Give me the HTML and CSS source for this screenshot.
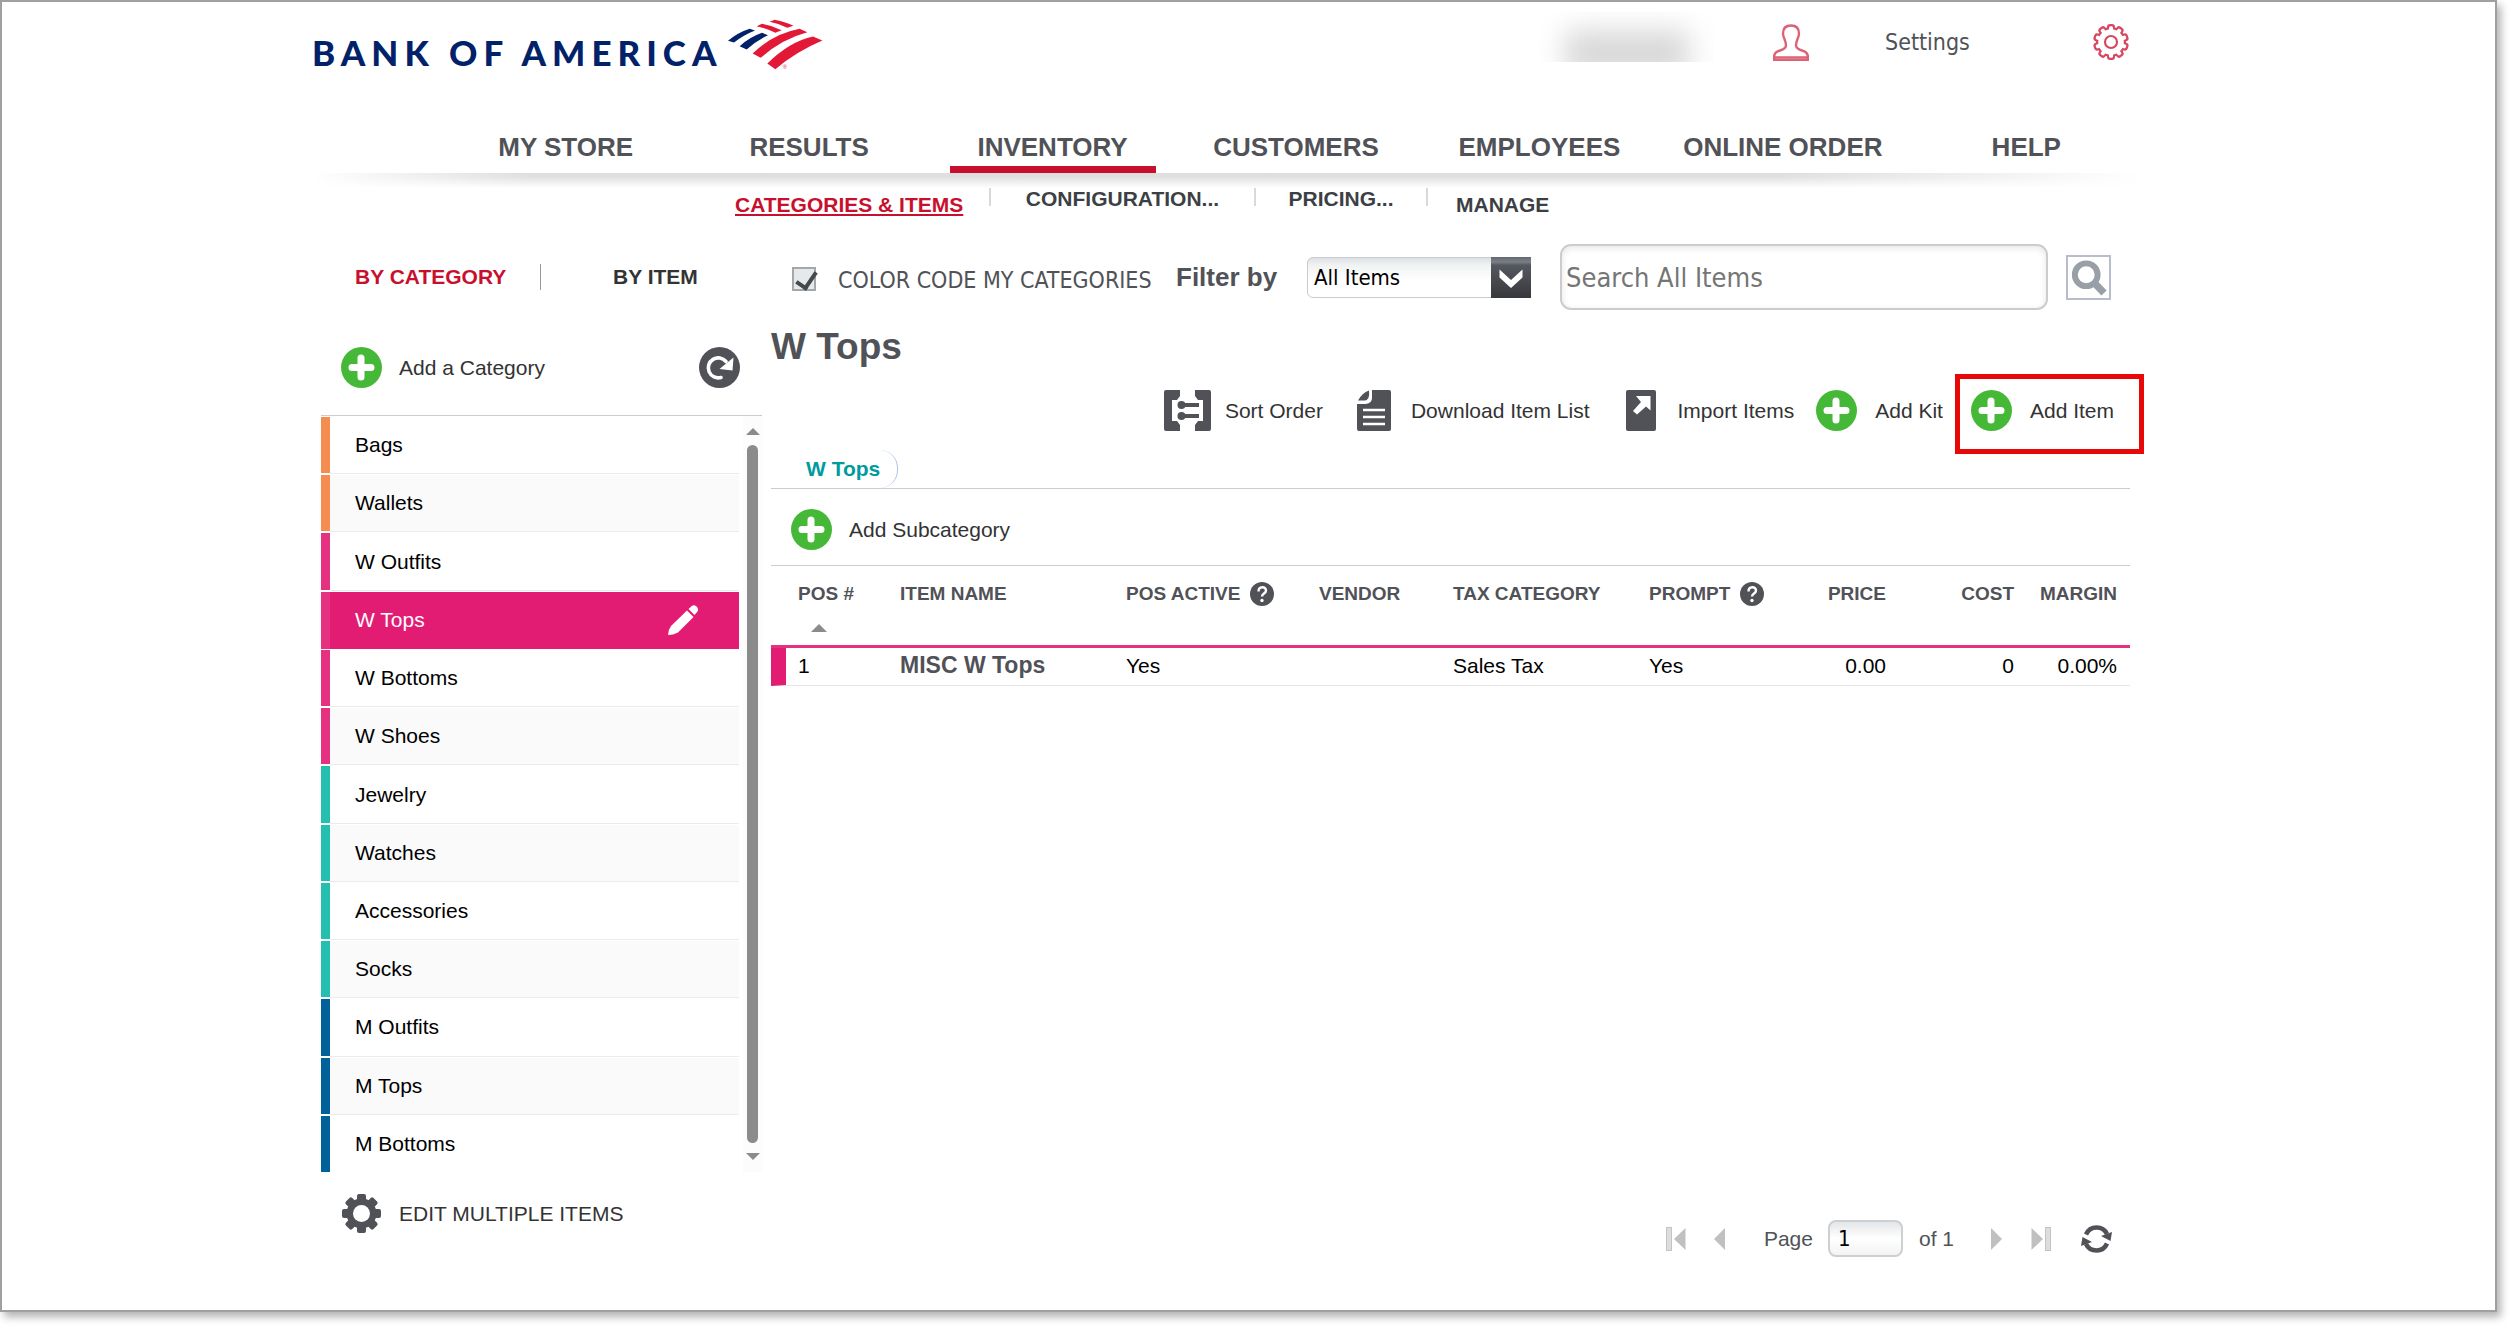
FILE: index.html
```html
<!DOCTYPE html>
<html lang="en">
<head>
<meta charset="utf-8">
<title>Inventory - Categories &amp; Items</title>
<link rel="stylesheet" href="styles.css">
</head>
<body>
<svg class="defs" aria-hidden="true">
  <symbol id="plus" viewBox="0 0 41 41"><circle cx="20.5" cy="20.5" r="20.5" fill="#45b937"/><path d="M20 11v19M11 20.500h19" stroke="#fff" stroke-width="7" stroke-linecap="round"/></symbol>
  <symbol id="help" viewBox="0 0 24 24"><circle cx="12" cy="12" r="12" fill="#505257"/><path d="M8.500 9.500c0-5.500 7.500-5.500 7.500-1 0 3-4 3-4 6" fill="none" stroke="#fff" stroke-width="2.400"/><circle cx="12" cy="18.500" r="1.700" fill="#fff"/></symbol>
</svg>
<div class="frame">
  <header class="header">
    <a class="logo" href="#"><span class="wordmark">BANK OF AMERICA</span>
      <svg class="flag" viewBox="20 28 285 155" aria-hidden="true">
        <g fill="#012169"><path d="M20 93Q50 68 85 57L101 62Q68 75 38 98Z"/><path d="M55 109Q85 82 122 69L140 76Q105 92 76 119Z"/></g>
        <g fill="#e31837"><path d="M145 36L160 30Q195 37 216 48L198 54Q175 42 145 36Z"/><path d="M106 49L122 42Q155 48 181 61L162 69Q135 56 106 49Z"/><path d="M94 131Q155 72 235 57L258 67Q180 88 118 144Z"/><path d="M138 161Q205 95 275 80L303 92Q225 125 162 178Z"/><text x="184" y="178" font-size="17" font-family="Liberation Sans, sans-serif">®</text></g>
      </svg>
    </a>
    <div class="account">
      <span class="redacted"></span>
      <svg class="user" viewBox="0 0 36 37" fill="none" stroke="#dc6276" stroke-width="2.400" stroke-linejoin="round"><path d="M18 1.500c-5 0-8 3-8 8 0 4 3 7 3 12 0 3-3 4-6 5-4 1-6 3-6 7v2.500h34V33.500c0-4-2-6-6-7-3-1-6-2-6-5 0-5 3-8 3-12 0-5-3-8-8-8z"/><path d="M1 33.500h34"/></svg>
      <a class="settings" href="#">Settings</a>
      <svg class="gear" viewBox="0 0 36 36">
        <g fill="#d8475f"><circle cx="18" cy="18" r="15"/><g id="rt"><rect x="14" y="0" width="8" height="36" rx="3"/></g><use href="#rt" transform="rotate(36 18 18)"/><use href="#rt" transform="rotate(72 18 18)"/><use href="#rt" transform="rotate(108 18 18)"/><use href="#rt" transform="rotate(144 18 18)"/></g>
        <g fill="#fff"><circle cx="18" cy="18" r="12.800"/><g id="wt"><rect x="16" y="2.200" width="4" height="31.600" rx="1.500"/></g><use href="#wt" transform="rotate(36 18 18)"/><use href="#wt" transform="rotate(72 18 18)"/><use href="#wt" transform="rotate(108 18 18)"/><use href="#wt" transform="rotate(144 18 18)"/></g>
        <circle cx="18" cy="18" r="6" fill="none" stroke="#d8475f" stroke-width="2.200"/>
      </svg>
    </div>
  </header>
  <nav class="nav">
    <a href="#">MY STORE</a><a href="#">RESULTS</a><a class="on" href="#">INVENTORY</a><a href="#">CUSTOMERS</a><a href="#">EMPLOYEES</a><a href="#">ONLINE ORDER</a><a href="#">HELP</a>
  </nav>
  <div class="shade"></div>
  <nav class="subnav">
    <span class="sub low"><a class="on" href="#">CATEGORIES &amp; ITEMS</a></span>
    <span class="sub mid"><a href="#">CONFIGURATION...</a></span>
    <span class="sub mid"><a href="#">PRICING...</a></span>
    <span class="sub low end"><a href="#">MANAGE</a></span>
  </nav>
  <div class="columns">
    <aside class="side">
      <div class="tabs"><a class="on" href="#">BY CATEGORY</a><a href="#">BY ITEM</a></div>
      <div class="add-category">
        <button class="action" type="button"><svg class="plus"><use href="#plus"/></svg>Add a Category</button>
        <button class="icon" type="button" aria-label="Refresh"><svg class="plus" viewBox="0 0 41 41"><circle cx="20.500" cy="20.500" r="20.500" fill="#505257"/><path d="M22 30.500a10 10 0 1 1 5-16" fill="none" stroke="#fff" stroke-width="3.600" stroke-linecap="round"/><path d="M34.500 10.500l-1 13-13-1.500z" fill="#fff"/></svg></button>
      </div>
      <div class="list">
        <ul class="cats">
          <li class="orange"><a href="#">Bags</a></li>
          <li class="orange"><a href="#">Wallets</a></li>
          <li class="pink"><a href="#">W Outfits</a></li>
          <li class="pink selected"><a href="#">W Tops<svg class="pencil" viewBox="0 0 30 30" fill="#fff"><path d="M19 5.500l6.500 6.500L10 27.500Q5 30 0 30 0 25 3 21z"/><path d="M20.500 4L24 .8Q26-.6 28.500 1.500 31 4 29.500 6.500L26.500 10z"/></svg></a></li>
          <li class="pink"><a href="#">W Bottoms</a></li>
          <li class="pink"><a href="#">W Shoes</a></li>
          <li class="teal"><a href="#">Jewelry</a></li>
          <li class="teal"><a href="#">Watches</a></li>
          <li class="teal"><a href="#">Accessories</a></li>
          <li class="teal"><a href="#">Socks</a></li>
          <li class="blue"><a href="#">M Outfits</a></li>
          <li class="blue"><a href="#">M Tops</a></li>
          <li class="blue"><a href="#">M Bottoms</a></li>
        </ul>
        <div class="scroll" aria-hidden="true"><i class="up"></i><i class="thumb"></i><i class="down"></i></div>
      </div>
      <button class="action edit" type="button"><svg class="plus" viewBox="0 0 41 41"><g fill="#505257"><g id="gt"><rect x="16" y="1" width="9" height="39" rx="2"/></g><use href="#gt" transform="rotate(45 20.500 20.500)"/><use href="#gt" transform="rotate(90 20.500 20.500)"/><use href="#gt" transform="rotate(135 20.500 20.500)"/><circle cx="20.500" cy="20.500" r="15"/></g><circle cx="20.500" cy="20.500" r="8.500" fill="#fff"/></svg>EDIT MULTIPLE ITEMS</button>
    </aside>
    <main class="main">
      <form class="filters">
        <input class="check" type="checkbox" id="color" checked>
        <label class="color" for="color">COLOR CODE MY CATEGORIES</label>
        <label class="filter" for="filter">Filter by</label>
        <span class="pick"><select id="filter"><option>All Items</option></select><svg viewBox="0 0 40 41" aria-hidden="true"><path d="M8.500 12.500L20 23l11.500-10.500v8L20 31 8.500 20.500z" fill="#fff"/></svg></span>
        <input class="search" type="text" placeholder="Search All Items" aria-label="Search All Items">
        <button class="go" type="button" aria-label="Search"><svg viewBox="0 0 45 45" fill="none" stroke="#989fa6"><circle cx="20" cy="19.500" r="12.500" stroke-width="6.500"/><path d="M28.500 28l11 11.500" stroke-width="8"/></svg></button>
      </form>
      <h1>W Tops</h1>
      <div class="toolbar">
        <button class="tool" type="button"><svg width="47" height="41" viewBox="0 0 47 41"><path d="M2 0h14v6l-3 4H8v21h5l3 4v6H2q-2 0-2-2V2Q0 0 2 0zM45 0H31v6l3 4h5v21h-5l-3 4v6h14q2 0 2-2V2q0-2-2-2z" fill="#505257"/><path d="M17 15h18M17 26h18" stroke="#505257" stroke-width="4"/><circle cx="17.500" cy="15" r="4" fill="#505257"/><circle cx="17.500" cy="26" r="4" fill="#505257"/></svg>Sort Order</button>
        <button class="tool download" type="button"><svg width="34" height="41" viewBox="0 0 34 41"><path d="M15 0h17q2 0 2 2v37q0 2-2 2H2q-2 0-2-2V14h9q6-1 6-6z" fill="#505257"/><path d="M1 10.500Q5 3 12 .5q1 9-4 10z" fill="#505257"/><path d="M6 20h22M6 27h22M6 34h22" stroke="#fff" stroke-width="2.500"/></svg>Download Item List</button>
        <button class="tool import" type="button"><svg width="30" height="41" viewBox="0 0 30 41"><rect width="30" height="41" rx="2" fill="#505257"/><path d="M10 6h14.500v14.500l-4.500-4-9 8-4-3.500 8-9z" fill="#fff"/></svg>Import Items</button>
        <button class="tool kit" type="button"><svg class="plus"><use href="#plus"/></svg>Add Kit</button>
        <button class="tool item" type="button"><svg class="plus"><use href="#plus"/></svg>Add Item</button>
      </div>
      <div class="crumbs"><a href="#">W Tops</a></div>
      <div class="subcategory"><button class="action" type="button"><svg class="plus"><use href="#plus"/></svg>Add Subcategory</button></div>
      <table class="items">
        <colgroup><col class="c1"><col class="c2"><col class="c3"><col class="c4"><col class="c5"><col class="c6"><col class="c7"><col class="c8"><col class="c9"></colgroup>
        <thead><tr><th>POS #<i class="sort"></i></th><th>ITEM NAME</th><th>POS ACTIVE<svg class="help"><use href="#help"/></svg></th><th>VENDOR</th><th>TAX CATEGORY</th><th>PROMPT<svg class="help"><use href="#help"/></svg></th><th class="num">PRICE</th><th class="num">COST</th><th class="num">MARGIN</th></tr></thead>
        <tbody><tr><td>1</td><td><a href="#">MISC W Tops</a></td><td>Yes</td><td></td><td>Sales Tax</td><td>Yes</td><td class="num">0.00</td><td class="num">0</td><td class="num">0.00%</td></tr></tbody>
      </table>
      <div class="pager">
        <button type="button" class="icon" aria-label="First page"><svg width="20" height="24" viewBox="0 0 20 24"><rect x=".5" y=".5" width="5" height="23" fill="#ddd" stroke="#c4c4c4"/><path d="M19.500 1v22L8 12z" fill="#c0c0c0"/></svg></button>
        <button type="button" class="icon prev" aria-label="Previous page"><svg width="13" height="24" viewBox="0 0 13 24"><path d="M12 1v22L1 12z" fill="#c0c0c0"/></svg></button>
        <label for="page">Page</label><input id="page" type="text" value="1"><span class="of">of 1</span>
        <button type="button" class="icon next" aria-label="Next page"><svg width="13" height="24" viewBox="0 0 13 24"><path d="M1 1v22l11-11z" fill="#c0c0c0"/></svg></button>
        <button type="button" class="icon final" aria-label="Last page"><svg width="20" height="24" viewBox="0 0 20 24"><rect x="14.500" y=".5" width="5" height="23" fill="#ddd" stroke="#c4c4c4"/><path d="M.5 1v22L12 12z" fill="#c0c0c0"/></svg></button>
        <button type="button" class="icon" aria-label="Reload"><svg width="31" height="28" viewBox="0 0 31 28"><path d="M5 9.500Q8 2.500 15.500 2.500T26 9M26 18.500q-3 7-10.500 7T5 19" fill="none" stroke="#505257" stroke-width="4.500"/><path d="M20 11l11-4-1.500 9zM11 17L0 21l1.500-9z" fill="#505257"/></svg></button>
      </div>
    </main>
  </div>
</div>
</body>
</html>
```
FILE: styles.css
```css
* { box-sizing: border-box; }
body { margin: 0; padding: 0 14px 15px 0; background: #fff; color: #333; font: 21px/24px "Liberation Sans", Arial, sans-serif; }
a { color: inherit; text-decoration: none; }
svg { display: block; flex: none; }
button { border: 0; padding: 0; background: none; color: inherit; font: inherit; cursor: pointer; }
.defs { position: absolute; width: 0; height: 0; }
.frame { border: 2px solid #a0a0a0; padding: 0 343px 53px 310px; box-shadow: 4px 5px 8px rgba(0, 0, 0, .3); }

.header { display: flex; justify-content: space-between; align-items: center; height: 80px; }
.logo { display: flex; align-items: flex-start; gap: 6px; padding-top: 6px; color: #012169; }
.wordmark { padding-top: 13px; font: 900 35px/40px Lato, sans-serif; letter-spacing: 6px; }
.flag { width: 95px; height: 52px; }
.account { display: flex; align-items: center; padding-right: 23px; color: #505257; }
.redacted { width: 176px; height: 50px; margin: 0 58px 10px 0; overflow: hidden; }
.redacted::before { content: ""; display: block; width: 124px; height: 46px; margin: 18px 26px 0; background: #d8d8d8; filter: blur(14px); }
.user { width: 36px; height: 37px; margin-right: 76px; }
.settings { width: 208px; font: 23px/28px "DejaVu Sans Condensed", "Noto Sans", sans-serif; }
.gear { width: 36px; height: 36px; }

.nav { display: grid; grid-template-columns: repeat(7, 1fr); justify-items: center; padding: 50px 4px 0 132px; color: #505257; font: 700 26px/30px "Liberation Sans", Arial, sans-serif; }
.nav a { width: 206px; padding-bottom: 4px; border-bottom: 7px solid transparent; text-align: center; white-space: nowrap; }
.nav .on { border-color: #c8102e; }
.shade { height: 15px; margin-right: 10px; background: linear-gradient(90deg, #fff, transparent 12%, transparent 80%, #fff), linear-gradient(#ddd, #e2e2e2 30%, #fff); }
.subnav { display: grid; grid-template-columns: 256px 265px 172px auto; height: 56px; padding-left: 423px; color: #3c3f44; font-weight: 700; }
.sub { height: 18px; border-right: 2px solid #d9d9d9; }
.mid { line-height: 22px; text-align: center; }
.low { line-height: 34px; }
.end { border: 0; padding-left: 28px; }
.subnav .on { color: #c8102e; text-decoration: underline; text-decoration-thickness: 2px; text-underline-offset: 2px; text-decoration-skip-ink: none; }

.columns { display: grid; grid-template-columns: 441px 1fr; gap: 9px; padding: 0 29px 0 9px; }
.side { padding-bottom: 4px; }
.tabs { display: flex; align-items: center; height: 66px; font-weight: 700; line-height: 26px; }
.tabs a { padding-left: 72px; }
.tabs .on { width: 220px; padding-left: 34px; border-right: 1px solid #999; color: #c8102e; }
.action { display: flex; align-items: center; gap: 17px; padding-left: 20px; }
.plus { width: 41px; height: 41px; }
.add-category { display: flex; justify-content: space-between; align-items: center; height: 106px; padding: 10px 22px 0 0; border-bottom: 1px solid #ccc; }
.list { display: flex; justify-content: space-between; height: 758px; }
.cats { display: flex; flex: none; flex-direction: column; width: 418px; margin: 1px 0 0; padding: 0; list-style: none; color: #000; }
.cats li { display: flex; flex: 1; padding-bottom: 1px; }
.cats li::before { content: ""; width: 9px; margin-bottom: 1px; background: currentColor; }
.cats a { display: flex; flex: 1; justify-content: space-between; align-items: center; padding: 0 41px 0 25px; border-bottom: 1px solid #ebebeb; color: #000; }
.cats li:nth-child(even) a { background: #fafafa; }
.cats li:last-child a { border-color: transparent; }
.cats .orange { color: #f68d50; }
.cats .pink { color: #e5317f; }
.cats .teal { color: #24bfae; }
.cats .blue { color: #006298; }
.cats li.selected a { border-color: #e31c73; background: #e31c73; color: #fff; }
.cats .selected::before { margin: 0; }
.pencil { width: 30px; height: 30px; }
.scroll { display: flex; flex-direction: column; align-items: center; gap: 10px; width: 19px; margin-bottom: 2px; padding: 12px 0; background: #fcfcfc; }
.up { border: solid transparent; border-width: 0 7px 7px; border-bottom-color: #8b8b8b; }
.down { border: solid transparent; border-width: 7px 7px 0; border-top-color: #8b8b8b; }
.thumb { flex: 1; width: 11px; border-radius: 6px; background: #8b8b8b; }
.edit { height: 79px; }

.main { display: flex; flex-direction: column; color: #333; }
.filters { display: flex; align-items: center; height: 66px; padding: 0 19px 0 21px; color: #505257; }
.check { appearance: none; width: 24px; height: 24px; margin: 4px 22px 0 0; border: 2px solid #a3a8ad; background: #e6e8ea; }
.check:checked::before { content: ""; display: block; width: 9px; height: 17px; margin: -1px 0 0 6px; border: solid #45484d; border-width: 0 4px 4px 0; transform: rotate(34deg); }
.color { width: 338px; padding-top: 6px; font: 23px/28px "DejaVu Sans Condensed", "Noto Sans", sans-serif; white-space: nowrap; }
.filter { width: 131px; font-size: 26px; font-weight: 700; }
.pick { position: relative; width: 224px; margin-right: 29px; }
.pick select { appearance: none; display: block; width: 100%; height: 41px; padding: 2px 6px 0; border: 1px solid #c8cbcd; border-radius: 6px 0 0 6px; background: linear-gradient(#dde1e3, #f2f4f4 20%, #fff 60%); color: #000; font: 22px/28px "DejaVu Sans Condensed", "Noto Sans", sans-serif; }
.pick svg { position: absolute; top: 0; right: 0; width: 40px; height: 41px; background: linear-gradient(#646870, #7b7f87 12%, #55585e 20%, #36383c); pointer-events: none; }
.search { flex: 1; min-width: 0; height: 66px; margin-right: 18px; padding: 0 4px; border: 2px solid #ccc; border-radius: 11px; box-shadow: inset 0 2px 7px rgba(0, 0, 0, .1); font: 27px/32px "DejaVu Sans Condensed", "Noto Sans", sans-serif; }
.search::placeholder { color: #757575; }
.go { width: 45px; height: 45px; border: 2px solid #b9bcca; background: #fff; }
.go svg { width: 41px; height: 41px; }
h1 { margin: 15px 0 21px; color: #505257; font-size: 37px; line-height: 44px; }
.toolbar { display: flex; justify-content: flex-end; height: 41px; margin-bottom: 19px; padding-right: 16px; white-space: nowrap; }
.tool { display: flex; align-items: center; gap: 14px; }
.download { gap: 20px; margin-left: 34px; }
.import { gap: 22px; margin-left: 36px; }
.kit { gap: 18px; margin-left: 22px; }
.item { position: relative; gap: 18px; margin-left: 28px; }
.item::after { content: ""; position: absolute; inset: -16px -30px -23px -16px; border: 5px solid #e90808; }
.crumbs { height: 39px; border-bottom: 1px solid #ccc; color: #009b9c; font-weight: 700; }
.crumbs a { display: inline-block; height: 38px; padding: 0 17px 0 35px; border-right: 1px solid #a9c3ec; border-radius: 0 18px 18px 0; line-height: 38px; }
.subcategory { display: flex; height: 77px; padding-top: 5px; border-bottom: 1px solid #ccc; }
.items { width: 100%; border-collapse: separate; border-spacing: 0; table-layout: fixed; color: #000; }
.c1 { width: 129px; } .c2 { width: 226px; } .c3 { width: 193px; } .c4 { width: 134px; } .c5 { width: 196px; } .c6 { width: 142px; } .c7 { width: 95px; } .c8 { width: 128px; } .c9 { width: 116px; }
.items th { height: 82px; padding: 16px 0 0; border-bottom: 3px solid #e5317f; color: #505257; font-size: 19px; text-align: left; vertical-align: top; white-space: nowrap; }
.items td { height: 38px; padding: 0 0 2px; border-bottom: 1px solid #e6e6e6; }
.items th:first-child { padding-left: 27px; }
.items td:first-child { padding-left: 12px; border-left: 15px solid #e31c73; }
.items td a { color: #505257; font-size: 23px; font-weight: 700; }
.items .num { text-align: right; }
.items .num:last-child { padding-right: 13px; }
.help { display: inline-block; width: 24px; height: 24px; margin-left: 10px; vertical-align: top; }
.sort { display: block; width: 0; margin: 18px 0 0 13px; border: solid transparent; border-width: 0 8px 8px; border-bottom-color: #8b8b8b; }
.pager { display: flex; justify-content: flex-end; align-items: center; height: 37px; margin-top: auto; padding-right: 18px; color: #505257; }
.prev { margin: 0 38px 0 27px; }
.pager input { width: 75px; height: 37px; margin: 0 16px 0 15px; padding: 0 8px; border: 2px solid #ccd0d2; border-radius: 8px; background: linear-gradient(#e3e7e9, #fff 50%, #f3f3f3); font: 22px/28px "DejaVu Sans Condensed", "Noto Sans", sans-serif; }
.next { margin: 0 28px 0 36px; }
.final { margin-right: 30px; }
```
